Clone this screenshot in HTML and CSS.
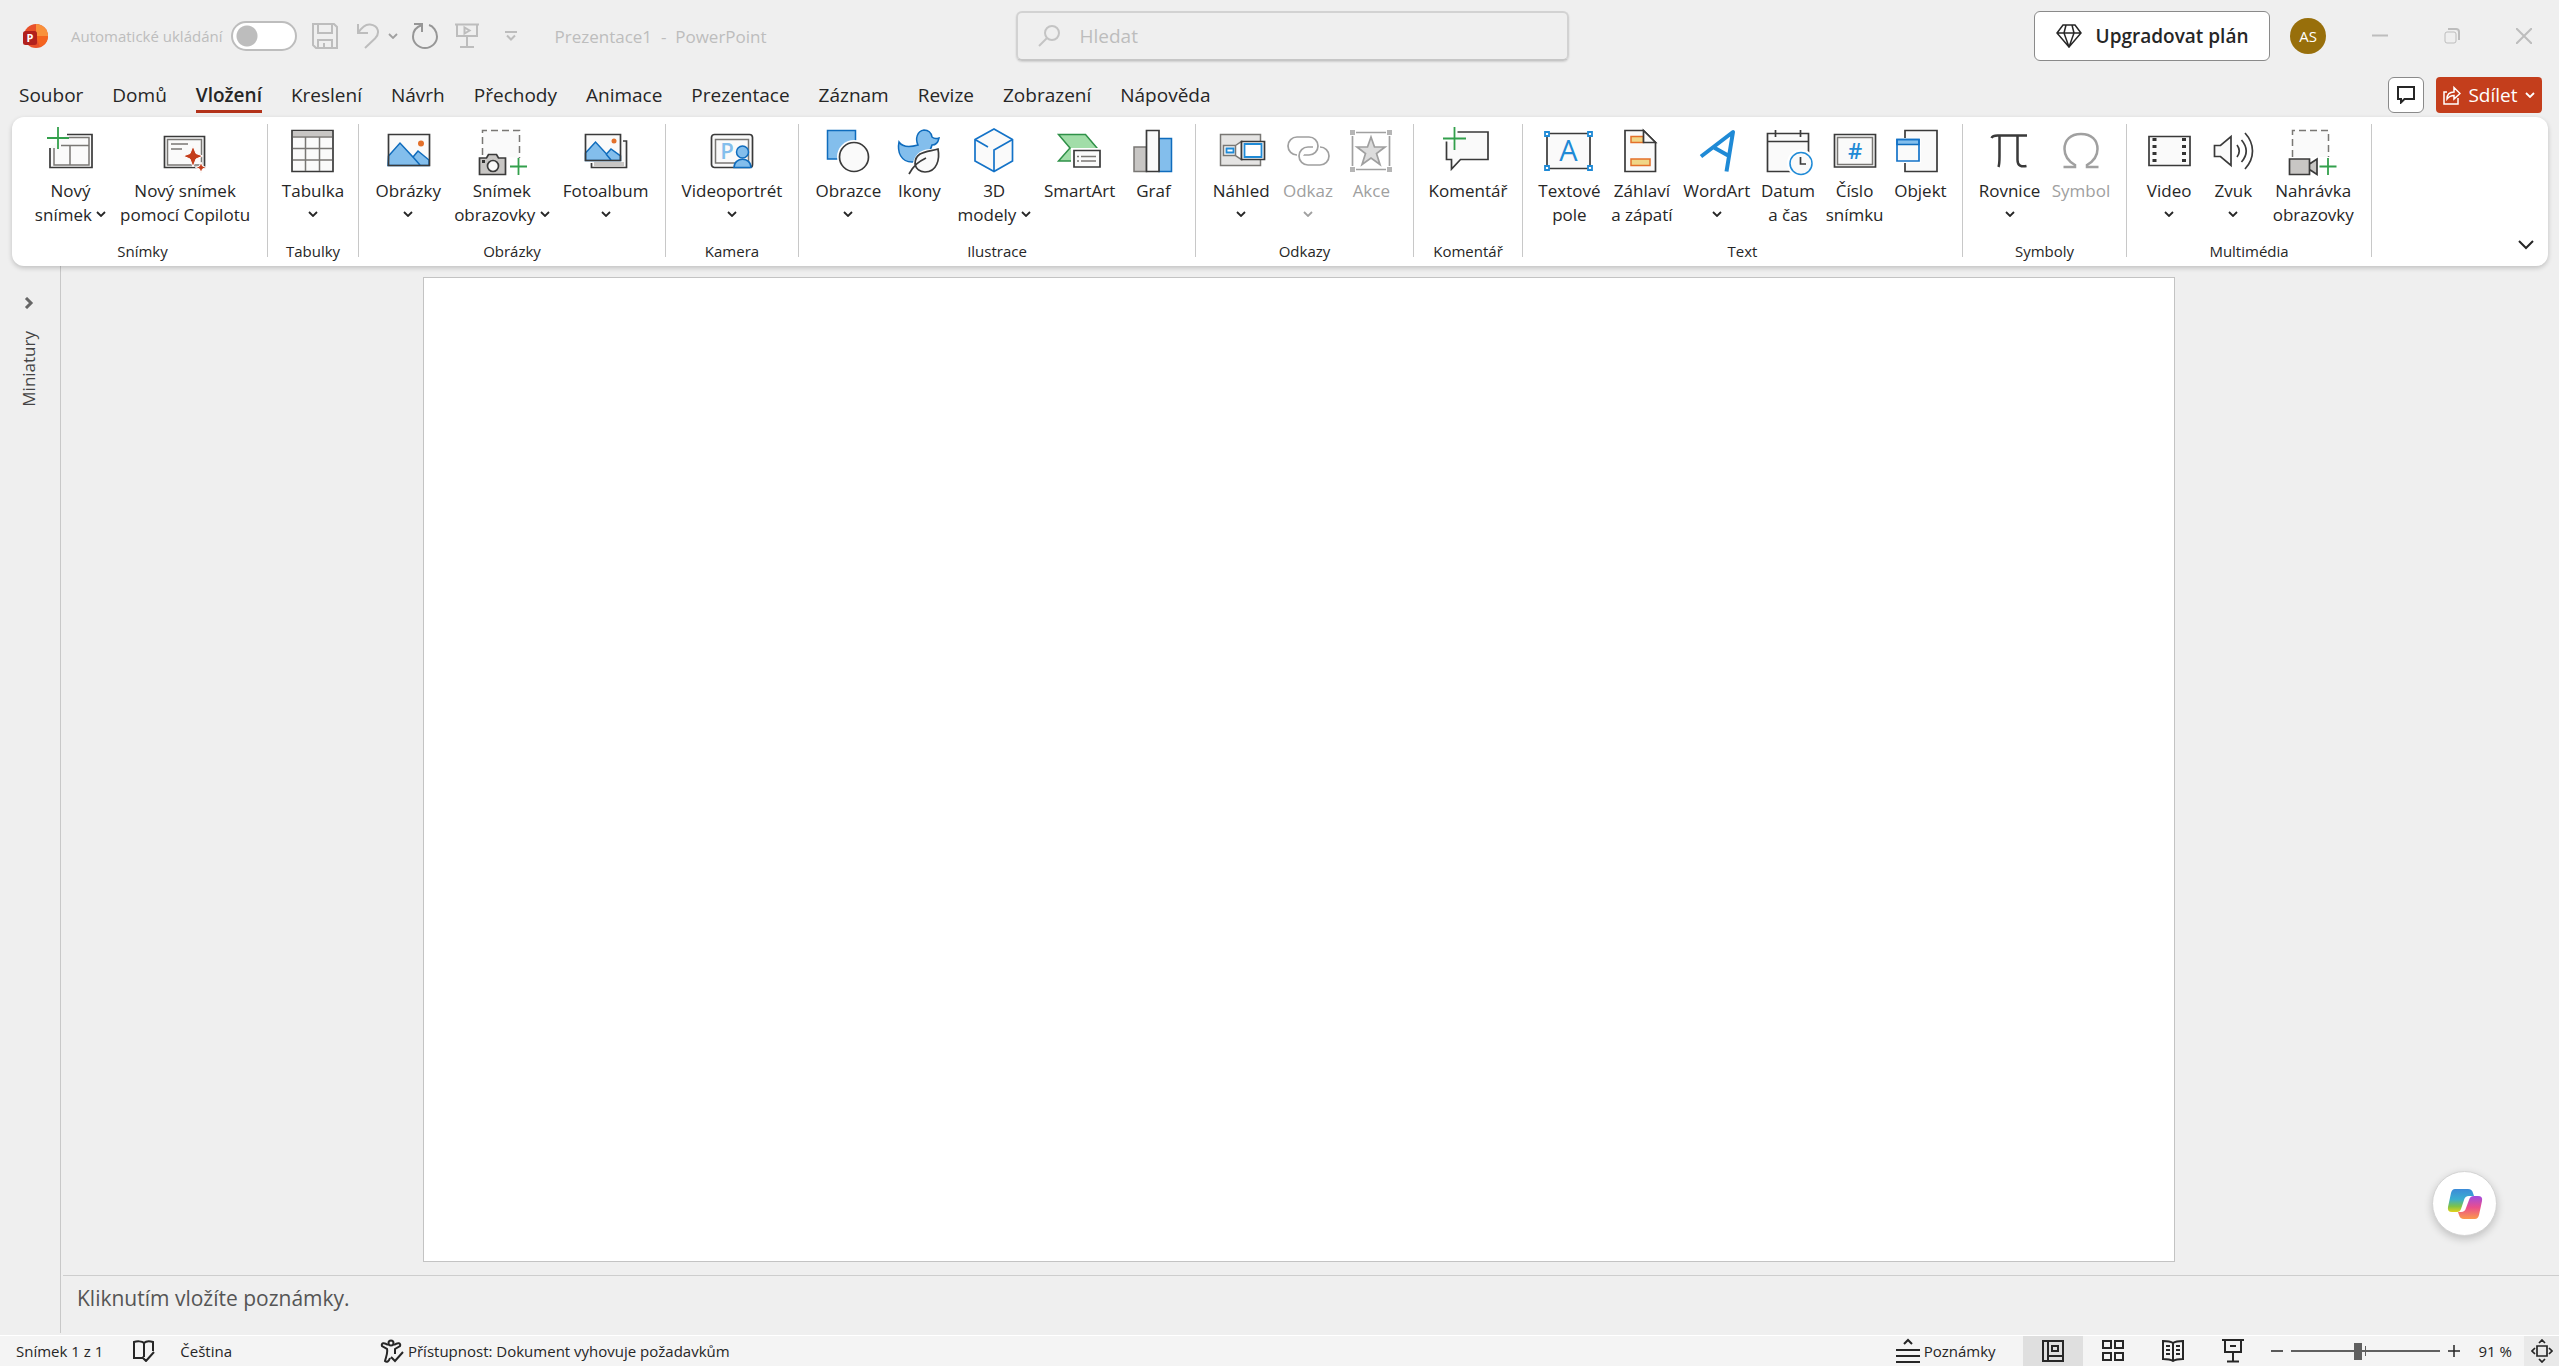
FILE: index.html
```html
<!DOCTYPE html>
<html lang="cs">
<head>
<meta charset="utf-8">
<title>Prezentace1 - PowerPoint</title>
<link rel="stylesheet" href="styles.css">
</head>
<body>
<svg class="defs" aria-hidden="true">
  <symbol id="chev" viewBox="0 0 10 6"><path d="M1 1l4 4 4-4" fill="none" stroke="currentColor" stroke-width="1.8"/></symbol>
</svg>
<div class="app">
  <header class="titlebar">
    <div class="start">
    <svg class="logo" viewBox="0 0 26 26" aria-label="PowerPoint">
      <circle cx="14" cy="13" r="12" fill="#e8502a"/>
      <path d="M14 1a12 12 0 0 1 12 12L20 17 14 13z" fill="#f9913b"/>
      <path d="M14 13l12 0a12 12 0 0 1-8 11z" fill="#f4641f"/>
      <rect x="1" y="8" width="14" height="14" rx="2.5" fill="#b2201d"/>
      <text x="8" y="19" text-anchor="middle" font-size="11" font-weight="700" fill="#fff">P</text>
    </svg>
    <label class="autosave">Automatické ukládání <input type="checkbox" class="switch"></label>
    <div class="quick">
      <button class="tool" aria-label="Uložit"><svg width="26" height="26" viewBox="0 0 26 26"><path d="M1 1h21l3 3v21H4l-3-3zM6 1v9h14V1M6 25v-8h14v8M12 20v5"/></svg></button>
      <button class="tool undo" aria-label="Zpět"><svg width="24" height="26" viewBox="0 0 24 26"><path d="M2 1v9h10M2 10C6 4 10 1 14 1.500c9 1 10 9 5 14L9 25"/></svg><svg width="10" height="6"><use href="#chev"/></svg></button>
      <button class="tool strong" aria-label="Znovu"><svg width="26" height="26" viewBox="0 0 26 26"><path d="M2 1h8v8M10 2C4 4 1 8 1 13.500a12 11.500 0 0 0 24 0C25 8 21 3 17 2"/></svg></button>
      <button class="tool show" aria-label="Spustit prezentaci"><svg width="24" height="26" viewBox="0 0 24 26"><path d="M0 1.500h24M2 2v11h20V2M12 13v11M5 24h14M9.500 4.500v6l5-3z"/></svg></button>
      <button class="tool more" aria-label="Přizpůsobit panel"><svg width="12" height="10" viewBox="0 0 12 10"><path d="M0 1h12M2 4.500l4 4 4-4"/></svg></button>
    </div>
    <span class="doc">Prezentace1&nbsp; -&nbsp; PowerPoint</span>
    </div>
    <div class="search">
      <svg width="22" height="22" viewBox="0 0 22 22"><circle cx="14" cy="8" r="7"/><path d="M9 13l-8 8"/></svg>
      <input type="text" placeholder="Hledat" aria-label="Hledat">
    </div>
    <div class="account">
      <button class="upgrade"><svg width="26" height="24" viewBox="0 0 26 24"><path d="M7 1h12l6 8-12 14L1 9zM1 9h24M10 1L8 9l5 14 5-14-2-8"/></svg>Upgradovat plán</button>
      <span class="avatar">AS</span>
      <button class="win" aria-label="Minimalizovat"><svg width="16" height="16" viewBox="0 0 16 16"><path d="M0 7.500h16"/></svg></button>
      <button class="win" aria-label="Obnovit"><svg width="16" height="16" viewBox="0 0 16 16"><rect x="1" y="4" width="11" height="11" rx="2"/><path d="M4 1h8a3 3 0 0 1 3 3v8"/></svg></button>
      <button class="win" aria-label="Zavřít"><svg width="16" height="16" viewBox="0 0 16 16"><path d="M0 0l16 16M16 0L0 16"/></svg></button>
    </div>
  </header>

  <nav class="tabs">
    <a href="#">Soubor</a><a href="#">Domů</a><a href="#" class="active">Vložení</a><a href="#">Kreslení</a><a href="#">Návrh</a><a href="#">Přechody</a><a href="#">Animace</a><a href="#">Prezentace</a><a href="#">Záznam</a><a href="#">Revize</a><a href="#">Zobrazení</a><a href="#">Nápověda</a>
    <div class="tab-actions">
      <button class="comments" aria-label="Komentáře"><svg width="18" height="18" viewBox="0 0 18 18"><path d="M1 1h16v12H7.500L4 16.500V13H1z"/></svg></button>
      <button class="share"><svg width="18" height="20" viewBox="0 0 18 20"><path d="M4 7H1v12h14v-6M4 14c0-5 3-7 7-7V2.500l6 6-6 5.500v-3.500c-3 0-5 1-7 3.500z"/></svg>Sdílet<svg class="c" width="10" height="6"><use href="#chev"/></svg></button>
    </div>
  </nav>

  <section class="ribbon">
    <div class="group">
      <div class="items">
        <button class="cmd"><svg class="ic" viewBox="0 0 48 48"><path class="p d" d="M20 8.500h25v33H3V22"/><path class="g" d="M22 11.500h20V39H7V22M22 19.500h20M14 19.500h8M23 19.500V39"/><path class="green" d="M11 1v22M0 12h22"/></svg><span>Nový<br>snímek <svg class="c"><use href="#chev"/></svg></span></button>
        <button class="cmd"><svg class="ic" viewBox="0 0 48 48"><path class="p d" d="M3.500 10.500h40v31h-40z"/><path class="g" d="M6.500 13.500h34V39h-34z"/><path class="g" d="M10 18h17M10 23h11"/><path d="M32 20l3 7.500 7 2.500-7 3-3 8-3-8-7-3 7-2.500zM40 36l1.500 4 4 1.500-4 1.500-1.500 4-1.500-4-4-1.500 4-1.500z" fill="#c43e1c" stroke="#fff" stroke-width="1"/></svg><span>Nový snímek<br>pomocí Copilotu</span></button>
      </div>
      <div class="name">Snímky</div>
    </div>
    <div class="group">
      <div class="items">
        <button class="cmd"><svg class="ic" viewBox="0 0 48 48"><path class="p d" d="M3 4.500h41v41H3z"/><path d="M4 5.500h39v5H4z" fill="#c8c6c4"/><path class="g" d="M4 11h39M4 22.500h39M4 34h39M16.500 11v34M30.500 11v34"/></svg><span>Tabulka<br><svg class="c"><use href="#chev"/></svg></span></button>
      </div>
      <div class="name">Tabulky</div>
    </div>
    <div class="group">
      <div class="items">
        <button class="cmd"><svg class="ic" viewBox="0 0 48 48"><path class="p" d="M4.500 8.500h41v31h-41z"/><path class="b" d="M4.500 30L16 17l13 14 5-6 11 9v5.500h-41zM29 31l7 8"/><circle cx="37" cy="17.500" r="3" fill="#e3702a"/><path class="d" d="M4.500 8.500h41v31h-41z"/></svg><span>Obrázky<br><svg class="c"><use href="#chev"/></svg></span></button>
        <button class="cmd"><svg class="ic" viewBox="0 0 48 48"><path class="p g" stroke-dasharray="7 4" d="M4.500 29V4.500h37V32"/><path class="s d" d="M1.500 32h7l2-3.500h8l2 3.500h7v16.500h-26z"/><circle class="p d" cx="15" cy="40" r="5.500"/><path d="M4 34h3v3H4z" fill="#333"/><path class="green" d="M40.500 32v17M32 40.500h17"/></svg><span>Snímek<br>obrazovky <svg class="c"><use href="#chev"/></svg></span></button>
        <button class="cmd"><svg class="ic" viewBox="0 0 48 48"><path class="p d" d="M41 15h3.500v26.500h-35V37"/><path d="M12 36h30v5H12z" fill="#c8c6c4"/><path class="p" d="M3.500 8.500h35v26h-35z"/><path class="b" d="M3.500 27l10-11 11 12 4.500-5 9.500 7v4.500h-35zM24 28l5 6"/><circle cx="32" cy="15" r="2.500" fill="#e3702a"/><path class="d" d="M3.500 8.500h35v26h-35z"/></svg><span>Fotoalbum<br><svg class="c"><use href="#chev"/></svg></span></button>
      </div>
      <div class="name">Obrázky</div>
    </div>
    <div class="group">
      <div class="items">
        <button class="cmd"><svg class="ic" viewBox="0 0 48 48"><rect class="p d" x="3.500" y="8.500" width="41" height="33" rx="3"/><path class="g" d="M7.500 13.500h33V37h-33z"/><text x="19" y="33" text-anchor="middle" font-size="22" font-weight="600" fill="#83beec">P</text><circle class="b" cx="34.500" cy="26" r="6" /><path class="b" d="M26 41.500c0-11 17-11 17 0z"/></svg><span>Videoportrét<br><svg class="c"><use href="#chev"/></svg></span></button>
      </div>
      <div class="name">Kamera</div>
    </div>
    <div class="group">
      <div class="items">
        <button class="cmd"><svg class="ic" viewBox="0 0 48 48"><path class="b" d="M3.500 4.500h28V33h-28z"/><circle cx="30" cy="31" r="17" fill="#fff"/><circle class="p d" cx="30" cy="31" r="14.500"/></svg><span>Obrazce<br><svg class="c"><use href="#chev"/></svg></span></button>
        <button class="cmd"><svg class="ic" viewBox="0 0 48 48"><path class="b" d="M4 16c4 6 12 5 19 3-3-6-1-14 6-15 4 0 7 2 8 7 2 2 4 2 7 1-1 5-4 7-7 7-1 5-8 17-20 17C6 36 2 26 4 16z"/><path d="M15 49c2-5 2-20 12-24 6-3 10-1 18-4 2 12 0 25-13 26-4 0-6 0-8-2l-5 5z" fill="#fff"/><path class="p d" d="M43 23c2 10-1 23-13 23-5 0-9-3-10-8 0-13 13-12 23-15zM14 48c5-9 9-12 17-16"/></svg><span>Ikony</span></button>
        <button class="cmd"><svg class="ic" viewBox="0 0 48 48"><path class="p" d="M24 3l18.500 10.500V35L24 45.500 5 35V13.500z"/><path class="bl" d="M24 3l18.500 10.500V35L24 45.500 5 35V13.500zM5 13.500L18 21M42.500 13.500L24 24v21"/></svg><span>3D<br>modely <svg class="c"><use href="#chev"/></svg></span></button>
        <button class="cmd"><svg class="ic" viewBox="0 0 48 48"><path d="M2.500 8.500h27L41 22 30 35H2.500L14 22z" fill="#a1dda8" stroke="#2f9148" stroke-width="1.500"/><path d="M15 22h31v21H15z" fill="#fff"/><path class="p d" d="M18 24.500h26v16.500H18z"/><path class="g" d="M21 30.500h2M25 30.500h15M21 35h2M25 35h15"/></svg><span>SmartArt</span></button>
        <button class="cmd"><svg class="ic" viewBox="0 0 48 48"><path class="s g" d="M5 21h12.500v24.500H5z"/><path class="b" d="M30 12.500h12.500v33H30z"/><path class="p d" d="M17.500 4.500H30v41H17.500z"/></svg><span>Graf</span></button>
      </div>
      <div class="name">Ilustrace</div>
    </div>
    <div class="group">
      <div class="items">
        <button class="cmd"><svg class="ic" viewBox="0 0 48 48"><path class="pale g" d="M3.500 8.500h40v31h-40z"/><path class="p g" d="M6.500 19.500h12v10h-12zM18.500 19.500l6-4v18l-6-4z"/><path class="p d" d="M24.500 15.500h23v18h-23z"/><path d="M27.500 18h17v13h-17zM9.500 22.500h7v4h-7z" fill="#fff" stroke="#1f8ad6" stroke-width="1.800"/></svg><span>Náhled<br><svg class="c"><use href="#chev"/></svg></span></button>
        <button class="cmd" disabled><svg class="ic" viewBox="0 0 48 48"><path class="g l" d="M13 29a9 9 0 0 1 0-18h12a9 9 0 0 1 0 18h-6"/><path d="M17 29c2-8 8-9 12-9" fill="none" stroke="#fff" stroke-width="5"/><path class="g l" d="M29 21h-5a9 9 0 0 0 0 18h12a9 9 0 0 0 0-18"/></svg><span>Odkaz<br><svg class="c"><use href="#chev"/></svg></span></button>
        <button class="cmd" disabled><svg class="ic" viewBox="0 0 48 48"><path class="g l" d="M5.500 10v30M42.500 10v30M9 6.500h30M9 43.500h30"/><path d="M3 4h5v5H3zM40 4h5v5h-5zM3 41h5v5H3zM40 41h5v5h-5z" fill="#b5b5b5"/><path class="l" d="M24 11l3.500 10H38l-8.500 6.500 3.500 11-9-6.500-9 6.500 3.500-11L10 21h10.500z" fill="#dcdcdc"/></svg><span>Akce</span></button>
      </div>
      <div class="name">Odkazy</div>
    </div>
    <div class="group">
      <div class="items">
        <button class="cmd"><svg class="ic" viewBox="0 0 48 48"><path class="p" d="M14 6h30v27.500H16.500l-9 9.500v-9.500h-5V16H10z"/><path class="d" d="M13.500 6H44v27.500H16.500l-9 9.500v-9.500h-5V15.500"/><path class="green" d="M10.500 1v23M-1 12.500h23"/></svg><span>Komentář</span></button>
      </div>
      <div class="name">Komentář</div>
    </div>
    <div class="group">
      <div class="items">
        <button class="cmd"><svg class="ic" viewBox="0 0 48 48"><path class="p d" d="M2 7.500h43v35H2z"/><path d="M0 6h4v4H0zM43 6h4v4h-4zM0 40h4v4H0zM43 40h4v4h-4z" fill="#fff" stroke="#1f8ad6" stroke-width="1.800"/><text x="23.500" y="35" text-anchor="middle" font-size="29" fill="#1f8ad6">A</text></svg><span>Textové<br>pole</span></button>
        <button class="cmd"><svg class="ic" viewBox="0 0 48 48"><path class="p d" d="M7 4.500h18.500l12 12v29H7z"/><path d="M13 10.500h12.500v6H13zM13 33h19v6.500H13z" fill="#f0d687" stroke="#e3702a" stroke-width="1.500"/><path class="p d" d="M25.500 4.500v12h12z"/></svg><span>Záhlaví<br>a zápatí</span></button>
        <button class="cmd"><svg class="ic" viewBox="0 0 48 48"><path d="M8 30.500L40 6l-6.500 39.500M20 21l16 9" fill="none" stroke="#1f8ad6" stroke-width="4" stroke-linejoin="round"/></svg><span>WordArt<br><svg class="c"><use href="#chev"/></svg></span></button>
        <button class="cmd"><svg class="ic" viewBox="0 0 48 48"><path class="p d" d="M3.500 7.500h41v38h-41zM3.500 15.500h41M11.500 4v7M36.500 4v7"/><circle cx="37" cy="37.500" r="14" fill="#fff"/><circle cx="37" cy="37.500" r="11" fill="#fafafa" stroke="#1f8ad6" stroke-width="1.500"/><path class="d" d="M36.500 31v7h5.500"/></svg><span>Datum<br>a čas</span></button>
        <button class="cmd"><svg class="ic" viewBox="0 0 48 48"><path class="p d" d="M3.500 8.500h41V41h-41z"/><path class="g" d="M6.500 11.500h35v27h-35z"/><text x="24" y="33" text-anchor="middle" font-size="22" font-weight="600" fill="#1f8ad6">#</text></svg><span>Číslo<br>snímku</span></button>
        <button class="cmd"><svg class="ic" viewBox="0 0 48 48"><path class="p d" d="M9 4.500h32v41H9z"/><path d="M-1 12h26v25H-1z" fill="#fff"/><path class="p" d="M1 13.500h22V35H1z"/><path class="b" d="M1 13.500h22v5H1z"/><path class="bl" d="M1 13.500h22V35H1z"/></svg><span>Objekt</span></button>
      </div>
      <div class="name">Text</div>
    </div>
    <div class="group">
      <div class="items">
        <button class="cmd"><svg class="ic" viewBox="0 0 48 48"><path class="d w" d="M5.500 12c1-2 3-2.500 6-2.500H41M13.500 10v20c0 5 0 8-1 11M31.500 10v24c0 6 4 7 9 6"/></svg><span>Rovnice<br><svg class="c"><use href="#chev"/></svg></span></button>
        <button class="cmd" disabled><svg class="ic" viewBox="0 0 48 48"><path class="g l w" d="M6.500 41H18v-2C11 35 7.500 30 7.500 23c0-9 6-15 16.500-15s16.500 6 16.500 15c0 7-3.500 12-10.500 16v2h11.500"/></svg><span>Symbol</span></button>
      </div>
      <div class="name">Symboly</div>
    </div>
    <div class="group">
      <div class="items">
        <button class="cmd"><svg class="ic" viewBox="0 0 48 48"><path class="p d" d="M4 10.500h41v29H4z"/><path d="M9.500 12v27M39 12v27" stroke="#333" stroke-width="4" stroke-dasharray="3 4" fill="none"/></svg><span>Video<br><svg class="c"><use href="#chev"/></svg></span></button>
        <button class="cmd"><svg class="ic" viewBox="0 0 48 48"><path class="p d" d="M5.500 19.500h6L22 10.500v29l-10.500-9h-6z"/><path class="d" d="M28 19c3 4 3 8 0 12M32.500 14c6 7 6 15 0 22M36 7c10 11 10 25 0 36"/></svg><span>Zvuk<br><svg class="c"><use href="#chev"/></svg></span></button>
        <button class="cmd"><svg class="ic" viewBox="0 0 48 48"><path class="p g" stroke-dasharray="7 4" d="M3.500 31V4.500h36V31"/><path class="s d" d="M.5 33h20v15.500H.5zM20.500 38l7.500-5v15.500l-7.500-5z"/><path class="green" d="M39 32v17M30.500 40.500h17"/></svg><span>Nahrávka<br>obrazovky</span></button>
      </div>
      <div class="name">Multimédia</div>
    </div>
    <button class="collapse" aria-label="Sbalit pás karet"><svg width="16" height="10" viewBox="0 0 16 10"><path d="M1 1l7 7 7-7"/></svg></button>
  </section>

  <main class="work">
    <aside class="thumbs">
      <button aria-label="Rozbalit miniatury"><svg width="10" height="12" viewBox="0 0 10 12"><path d="M2 1l5 5-5 5"/></svg></button>
      <span>Miniatury</span>
    </aside>
    <div class="editor">
      <div class="stage"><div class="slide"></div></div>
      <div class="notes">Kliknutím vložíte poznámky.</div>
    </div>
    <button class="copilot" aria-label="Copilot">
      <svg width="36" height="36" viewBox="0 0 36 36">
        <defs>
          <linearGradient id="ca" x1="0" y1="0" x2="0" y2="1"><stop offset="0" stop-color="#3b8ad8"/><stop offset=".45" stop-color="#3aaed0"/><stop offset=".75" stop-color="#7cc24a"/><stop offset="1" stop-color="#e3d21c"/></linearGradient>
          <linearGradient id="cb" x1="0" y1="0" x2="0" y2="1"><stop offset="0" stop-color="#a24be0"/><stop offset=".5" stop-color="#ea4f8c"/><stop offset="1" stop-color="#fb9a4b"/></linearGradient>
        </defs>
        <path d="M8 3h13q4 0 5 4l1 3h-5q-4 0-5 4l-3 9q-1 3-4 3H5q-5 0-4-5L4 7q1-4 4-4z" fill="url(#ca)"/>
        <path d="M28 33H17q-4 0-5-4l-1-3h3q4 0 5-4l3-8q1-4 5-4h4q5 0 4 5l-3 14q-1 4-4 4z" fill="url(#cb)"/>
      </svg>
    </button>
  </main>

  <footer class="status">
    <span class="count">Snímek 1 z 1</span>
    <button class="spell" aria-label="Pravopis"><svg width="22" height="22" viewBox="0 0 22 22"><path d="M11 3v14M11 3C9 1 4 1 1 2v16h8M11 3c2-2 6-2 9-1v9M9 17l4 4 8-9"/></svg></button>
    <button class="lang">Čeština</button>
    <button class="access"><svg width="24" height="24" viewBox="0 0 24 24"><circle cx="11" cy="4" r="2.500"/><path d="M8 6C4 3 1 4 2 7l5 3c1 4-1 8-2 12 2 2 4 0 5-3M14 6c4-3 7-2 6 1l-5 3v5M11 18l4 4 8-9"/></svg>Přístupnost: Dokument vyhovuje požadavkům</button>
    <div class="views">
      <button class="note"><svg width="24" height="26" viewBox="0 0 24 26"><path d="M8 6l4-4 4 4M0 12h24M0 18h24M0 24h24"/></svg>Poznámky</button>
      <button class="view on" aria-label="Normální"><svg width="22" height="22" viewBox="0 0 22 22"><path d="M1 1h20v20H1zM6 1v20M6 16h15M10 6h6v5h-6z"/></svg></button>
      <button class="view" aria-label="Řazení snímků"><svg width="22" height="22" viewBox="0 0 22 22"><path d="M1 1h8v7H1zM13 1h8v7h-8zM1 13h8v7H1zM13 13h8v7h-8z"/></svg></button>
      <button class="view" aria-label="Čtení"><svg width="22" height="22" viewBox="0 0 22 22"><path d="M11 3v18M11 3C8 1 4 1 1 1v18c4 0 7 0 10 2 3-2 6-2 10-2V1c-3 0-7 0-10 2M4 6h4M4 10h4M4 14h4M14 6h4M14 10h4M14 14h4"/></svg></button>
      <button class="view" aria-label="Prezentace"><svg width="22" height="24" viewBox="0 0 22 24"><path d="M0 1h22M3 1v12h16V1M8 7h6M11 13v9M5 22.500h12"/></svg></button>
      <div class="zoom">
        <button aria-label="Oddálit"><svg width="12" height="12" viewBox="0 0 12 12"><path d="M0 6h12"/></svg></button>
        <span class="track"><input type="range" min="0" max="100" value="45" aria-label="Lupa"></span>
        <button aria-label="Přiblížit"><svg width="12" height="12" viewBox="0 0 12 12"><path d="M0 6h12M6 0v12"/></svg></button>
      </div>
      <button class="pct">91 %</button>
      <button class="fit" aria-label="Přizpůsobit oknu"><svg width="22" height="24" viewBox="0 0 22 24"><path d="M6 7h10v10H6zM8 4l3-3 3 3M8 20l3 3 3-3M4 9l-3 3 3 3M18 9l3 3-3 3"/></svg></button>
    </div>
  </footer>
</div>
</body>
</html>
```
FILE: styles.css
```css
* { box-sizing: border-box; }
body {
  margin: 0;
  background: #efefef;
  color: #262626;
  font-family: "Open Sans", "Noto Sans", sans-serif;
  font-size: 17px;
}
button, input { font: inherit; color: inherit; }
button { padding: 0; border: 0; background: none; white-space: nowrap; }
svg { display: block; flex: none; }
svg path, svg circle, svg rect { fill: none; }
.defs { position: absolute; width: 0; height: 0; }
.app { display: flex; flex-direction: column; min-height: 100vh; }

/* title bar */
.titlebar {
  display: grid;
  grid-template-columns: 1fr auto 1fr;
  align-items: center;
  height: 72px;
  padding: 0 27px 0 22px;
  color: #bdbdbd;
}
.start { display: flex; align-items: center; }
.titlebar path, .titlebar circle { stroke-width: 2; }
.logo { width: 26px; height: 26px; }
.logo circle:first-child { fill: #e8502a; }
.logo path:nth-of-type(1) { fill: #f9913b; }
.logo path:nth-of-type(2) { fill: #f4641f; }
.logo rect { fill: #b2201d; }
.autosave { display: flex; align-items: center; gap: 8px; margin-left: 23px; font-size: 15px; white-space: nowrap; }
.switch {
  appearance: none;
  width: 66px;
  height: 30px;
  margin: 0;
  border: 2px solid #bdbdbd;
  border-radius: 15px;
  background: radial-gradient(circle at 14px 13px, #bdbdbd 10px, #fff 11px);
}
.quick { display: flex; align-items: center; margin-left: 15px; }
.tool { display: flex; align-items: center; gap: 8px; stroke: #bdbdbd; }
.tool.undo { margin-left: 18px; }
.tool.undo use { color: #a0a0a0; stroke: none; }
.tool.strong { margin-left: 14px; stroke: #969696; }
.tool.show { margin-left: 17px; }
.tool.more { margin-left: 26px; }
.doc { margin-left: 38px; font-size: 17px; white-space: pre; }
.search {
  display: flex;
  align-items: center;
  gap: 18px;
  width: 553px;
  height: 50px;
  margin-left: 30px;
  padding: 0 20px;
  border: 2px solid #d2d2d2;
  border-bottom-color: #c6c6c6;
  border-radius: 6px;
  box-shadow: 0 1px 2px #0002;
  stroke: #c4c4c4;
}
.search input { flex: 1; min-width: 0; border: 0; outline: 0; background: none; font-size: 19px; }
.search input::placeholder { color: #bdbdbd; opacity: 1; }
.account { display: flex; align-items: center; justify-content: flex-end; }
.upgrade {
  display: flex;
  align-items: center;
  justify-content: center;
  gap: 14px;
  width: 236px;
  height: 50px;
  border: 1px solid #8a8a8a;
  border-radius: 6px;
  background: #fff;
  color: #262626;
  font-size: 19px;
  font-weight: 600;
}
.upgrade path { stroke: #262626; stroke-width: 1.5; }
.avatar {
  width: 36px;
  height: 36px;
  margin: 0 30px 0 20px;
  border-radius: 50%;
  background: #986f0b;
  color: #fff;
  font-size: 15px;
  line-height: 36px;
  text-align: center;
}
.win { width: 48px; display: grid; place-items: center; stroke: #bdbdbd; }
.win + .win { margin-left: 24px; }
.win:last-child { margin-right: -16px; }

/* tabs */
.tabs { display: flex; align-items: center; gap: 29px; height: 45px; padding: 0 17px 0 19px; font-size: 19px; }
.tabs a { height: 34px; line-height: 32px; margin-top: 2px; color: #262626; text-decoration: none; white-space: nowrap; }
.tabs .active { font-weight: 600; border-bottom: 3px solid #b3321a; }
.tab-actions { display: flex; gap: 12px; margin-left: auto; }
.comments { display: grid; place-items: center; width: 36px; height: 36px; border: 1px solid #8a8a8a; border-radius: 6px; background: #fff; stroke: #262626; stroke-width: 2; }
.share { display: flex; align-items: center; justify-content: center; gap: 7px; width: 106px; height: 36px; border-radius: 4px; background: #c43e1c; color: #fff; font-size: 19px; }
.share > svg:first-child { stroke: #fff; stroke-width: 1.5; }

/* ribbon: one column per command group, the rest for the collapse button */
.ribbon {
  display: grid;
  grid-template-columns: 256px 91px 307px 133px 397px 218px 109px 440px 164px 245px 1fr;
  z-index: 1;
  height: 149px;
  margin: 0 11px 0 12px;
  padding: 7px 0 9px;
  border-radius: 12px;
  background: #fff;
  box-shadow: 0 2px 5px #0003;
}
.group { display: flex; flex-direction: column; justify-content: space-between; padding: 2px 10px 0; border-right: 1px solid #c8c8c8; }
.group:first-child { padding-left: 16px; }
.items { display: flex; justify-content: space-around; }
.cmd { display: flex; flex-direction: column; align-items: center; gap: 5px; min-width: 58px; padding: 0 4px; line-height: 24px; text-align: center; }
.cmd .c { display: inline-block; width: 10px; height: 6px; vertical-align: 4px; }
.cmd:disabled { color: #a0a0a0; }
.name { margin-bottom: -4px; font-size: 15px; line-height: 20px; text-align: center; }
.ic { width: 48px; height: 48px; overflow: visible; }
.ic path, .ic circle, .ic rect { fill: revert-layer; }
.ic .p { fill: #fafafa; }
.ic .d { stroke: #3a3a3a; stroke-width: 1.7; }
.ic .g { stroke: #797774; stroke-width: 1.5; }
.ic .d:not(.p, .s), .ic .g:not(.p, .s) { fill: none; }
.ic .s { fill: #c8c6c4; }
.ic .pale.g { fill: #e5e4e3; }
.ic .b { fill: #83beec; stroke: #0f6cbd; stroke-width: 1.5; }
.ic .bl { fill: none; stroke: #1473c8; stroke-width: 1.7; }
.ic .green { fill: none; stroke: #33a04c; stroke-width: 1.8; }
.ic .l { stroke: #a0a0a0; stroke-width: 1.7; }
.ic .w { stroke-width: 2.5; }
.collapse { margin: 0 14px 7px; align-self: end; justify-self: end; }
.collapse path { stroke: #262626; stroke-width: 2; }

/* workspace */
.work { position: relative; display: flex; flex: 1; }
.thumbs { display: flex; flex-direction: column; align-items: center; gap: 22px; width: 61px; margin-bottom: 2px; padding: 31px 3px 0 0; border-right: 1px solid #c8c8c8; color: #444; }
.thumbs path { stroke: #666; stroke-width: 3; }
.thumbs span { writing-mode: vertical-rl; transform: rotate(180deg); line-height: 20px; }
.editor { display: flex; flex: 1; flex-direction: column; padding-left: 2px; }
.stage { display: flex; flex: 1; justify-content: center; padding: 11px 24px 13px 0; }
.slide { aspect-ratio: 16 / 9; border: 1px solid #c3c3c3; background: #fff; }
.notes { height: 60px; padding: 7px 14px; border-top: 1px solid #cdcdcd; color: #555; font-size: 21px; line-height: 30px; }
.copilot {
  position: absolute;
  right: 62px;
  bottom: 99px;
  display: grid;
  place-items: center;
  width: 65px;
  height: 65px;
  border: 1px solid #d4d4d4;
  border-radius: 50%;
  background: #fff;
  box-shadow: 0 3px 8px #0003;
}
.copilot path:nth-of-type(1) { fill: url(#ca); }
.copilot path:nth-of-type(2) { fill: url(#cb); }

/* status bar */
.status { display: flex; align-items: center; height: 31px; padding-left: 16px; border-top: 1px solid #fff; background: #f4f4f4; font-size: 15px; stroke-width: 2; }
.status path, .status circle { stroke: #262626; }
.spell { margin-left: 30px; }
.lang { margin-left: 25px; }
.access { display: flex; align-items: center; gap: 4px; margin-left: 148px; }
.views { display: flex; align-items: center; align-self: stretch; margin-left: auto; }
.note { display: flex; align-items: center; gap: 4px; margin-right: 27px; }
.view { display: grid; place-items: center; align-self: stretch; width: 60px; }
.view.on { background: #dfdfdf; }
.zoom { display: flex; align-items: center; gap: 8px; margin: 0 19px 0 8px; stroke-width: 1.5; }
.track { position: relative; display: flex; }
.track::after { content: ""; position: absolute; left: 50%; top: 6px; width: 1px; height: 10px; background: #606060; }
.track input { appearance: none; width: 149px; height: 22px; margin: 0; background: linear-gradient(#606060, #606060) center / 100% 2px no-repeat; }
.track input::-webkit-slider-thumb { appearance: none; width: 8px; height: 17px; background: #606060; }
.pct { margin-right: 12px; }
.fit { display: grid; place-items: center; align-self: stretch; width: 35px; background: #e9e9e9; stroke-width: 1.7; }
```
